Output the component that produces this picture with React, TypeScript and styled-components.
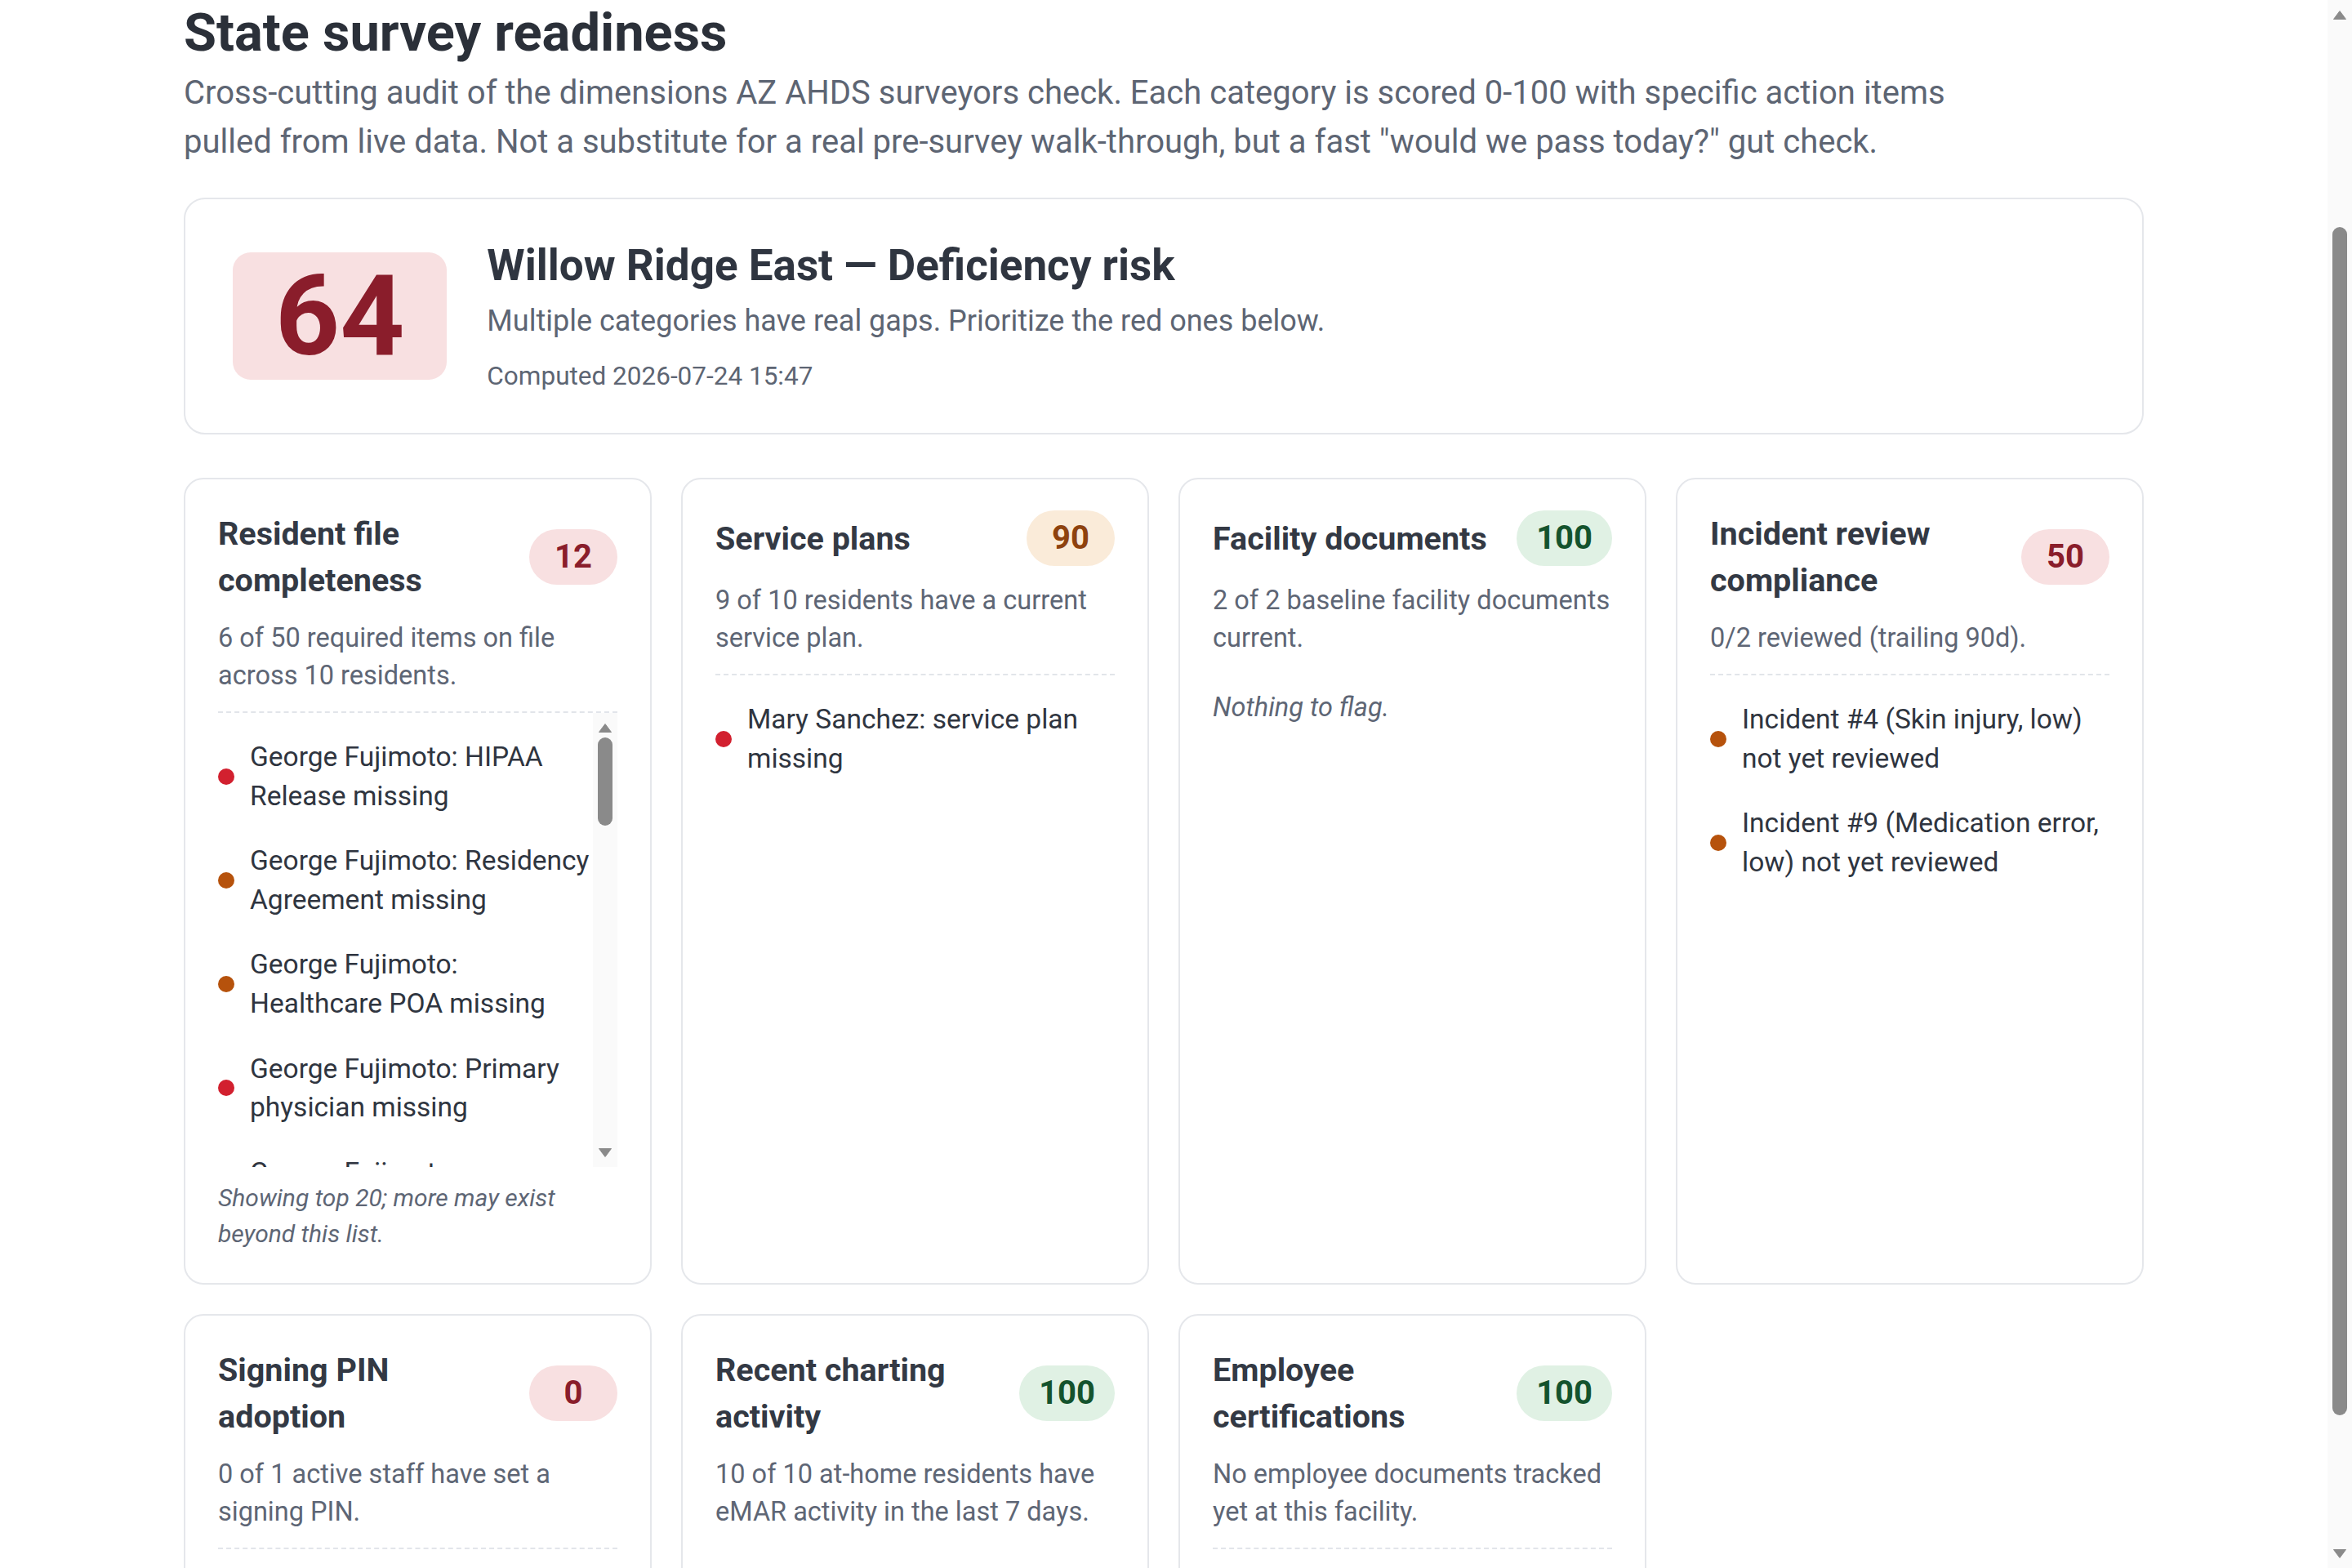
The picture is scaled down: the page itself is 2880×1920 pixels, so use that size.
import React, { useLayoutEffect, useRef, useState } from "react";
import styled, { createGlobalStyle, css } from "styled-components";

type Tone = "red" | "amber" | "green";
type Level = "high" | "medium";
type FrameKind = "page" | "list";

interface Finding {
  text: string;
  level: Level;
}

interface Category {
  title: string;
  score: number;
  tone: Tone;
  desc: string;
  findings: Finding[];
  scroll?: boolean;
  note?: string;
}

const GlobalStyle = createGlobalStyle`
  html, body, #root {
    margin: 0;
    padding: 0;
    height: 100%;
    overflow: hidden;
    background: #ffffff;
  }
  body {
    font-family: Roboto, "Liberation Sans", Arial, sans-serif;
    color: #333a45;
  }
  *, *::before, *::after { box-sizing: border-box; }
`;

const toneColors: Record<Tone, { bg: string; fg: string }> = {
  red: { bg: "#f8e0e1", fg: "#8a1d2b" },
  amber: { bg: "#faebd9", fg: "#8e420e" },
  green: { bg: "#e0f1e4", fg: "#14532d" },
};

const dotColors: Record<Level, string> = {
  high: "#d2202f",
  medium: "#b6520c",
};

/* ---------- scroll frame with a drawn classic scrollbar ---------- */

const Frame = styled.div<{ $kind: FrameKind }>`
  display: flex;
  ${({ $kind }) =>
    $kind === "page"
      ? css`
          height: 100vh;
        `
      : css`
          max-height: 558px;
          margin-top: 21px;
          border-top: 2px dashed #e2e5ea;
        `}
`;

const ScrollViewport = styled.div`
  flex: 1;
  min-width: 0;
  overflow: hidden;
  scrollbar-width: none;
`;

const Rail = styled.div`
  width: 30px;
  flex-shrink: 0;
  display: flex;
  flex-direction: column;
  background: #fafafa;
`;

const RailButton = styled.div<{ $dir: "up" | "down" }>`
  height: 30px;
  flex-shrink: 0;
  display: flex;
  justify-content: center;
  align-items: ${({ $dir }) => ($dir === "up" ? "flex-start" : "flex-end")};
  padding: ${({ $dir }) => ($dir === "up" ? "13px 0 0" : "0 0 12px")};
`;

const RailTrack = styled.div`
  flex: 1;
  min-height: 0;
  display: flex;
  flex-direction: column;
  align-items: center;
`;

const RailThumb = styled.div`
  width: 18px;
  flex-shrink: 0;
  border-radius: 9px;
  background: #8a8a8a;
`;

const Arrow: React.FC<{ dir: "up" | "down" }> = ({ dir }) => (
  <svg width="16" height="11" viewBox="0 0 16 11" aria-hidden="true">
    <polygon
      points={dir === "up" ? "8,0.5 15.5,10.5 0.5,10.5" : "0.5,0.5 15.5,0.5 8,10.5"}
      fill="#8a8a8a"
      stroke="#8a8a8a"
      strokeWidth="1"
      strokeLinejoin="round"
    />
  </svg>
);

const ScrollFrame: React.FC<{
  kind: FrameKind;
  initialScroll?: number;
  children: React.ReactNode;
}> = ({ kind, initialScroll = 0, children }) => {
  const viewRef = useRef<HTMLDivElement>(null);
  const trackRef = useRef<HTMLDivElement>(null);
  const [thumb, setThumb] = useState({ offset: 0, size: 0 });

  useLayoutEffect(() => {
    const measure = () => {
      const view = viewRef.current;
      const track = trackRef.current;
      if (!view || !track) return;
      view.scrollTop = initialScroll;
      const trackLen = track.clientHeight;
      const total = view.scrollHeight;
      const visible = view.clientHeight;
      const size = Math.max(40, Math.round((trackLen * visible) / Math.max(total, 1)));
      const maxScroll = Math.max(total - visible, 1);
      const offset = Math.round((view.scrollTop / maxScroll) * (trackLen - size));
      setThumb({ offset, size });
    };
    measure();
    const t = window.setTimeout(measure, 80);
    if (document.fonts) document.fonts.ready.then(measure);
    window.addEventListener("resize", measure);
    return () => {
      window.clearTimeout(t);
      window.removeEventListener("resize", measure);
    };
  }, [initialScroll]);

  return (
    <Frame $kind={kind}>
      <ScrollViewport ref={viewRef}>{children}</ScrollViewport>
      <Rail>
        <RailButton $dir="up">
          <Arrow dir="up" />
        </RailButton>
        <RailTrack ref={trackRef}>
          <RailThumb style={{ marginTop: thumb.offset, height: thumb.size }} />
        </RailTrack>
        <RailButton $dir="down">
          <Arrow dir="down" />
        </RailButton>
      </Rail>
    </Frame>
  );
};

/* ---------- page ---------- */

const TopBar = styled.header`
  height: 120px;
  display: flex;
  align-items: center;
  gap: 40px;
  padding: 0 226px;
  border-bottom: 2px solid #eef0f3;
  font-size: 32px;
  font-weight: 600;
  color: #333a45;
`;

const TopLink = styled.span`
  font-weight: 400;
  color: #5e6675;
`;

const Main = styled.main`
  max-width: 2400px;
  margin: 0 auto;
  padding: 207px 0 50px;
`;

const PageTitle = styled.h1`
  margin: 0 0 4px;
  font-size: 65px;
  line-height: 80px;
  font-weight: 700;
  color: #2b3039;
`;

const Lead = styled.p`
  margin: 0;
  max-width: 2200px;
  font-size: 40px;
  line-height: 60px;
  color: #5d6573;
`;

const ScoreCard = styled.section`
  margin-top: 38px;
  display: flex;
  align-items: center;
  gap: 49px;
  padding: 47px 58px;
  border: 2px solid #e5e7eb;
  border-radius: 26px;
  background: #fff;
`;

const ScoreBox = styled.div<{ $tone: Tone }>`
  flex-shrink: 0;
  padding: 9px 52px;
  border-radius: 22px;
  font-size: 138px;
  line-height: 1;
  font-weight: 700;
  ${({ $tone }) => css`
    background: ${toneColors[$tone].bg};
    color: ${toneColors[$tone].fg};
  `}
`;

const ScoreText = styled.div`
  display: flex;
  flex-direction: column;
`;

const ScoreHeading = styled.h2`
  margin: 0 0 7px;
  font-size: 53px;
  line-height: 68px;
  font-weight: 700;
  color: #2f3540;
`;

const ScoreSummary = styled.p`
  margin: 0 0 18px;
  font-size: 36px;
  line-height: 54px;
  color: #5d6573;
`;

const Computed = styled.p`
  margin: 0;
  font-size: 31.5px;
  line-height: 45px;
  color: #5d6573;
`;

const Grid = styled.div`
  margin-top: 53px;
  display: grid;
  grid-template-columns: repeat(4, minmax(0, 1fr));
  gap: 36px;
`;

const Card = styled.article`
  display: flex;
  flex-direction: column;
  padding: 38px 40px;
  border: 2px solid #e5e7eb;
  border-radius: 24px;
  background: #fff;
`;

const CardHeader = styled.div`
  display: flex;
  align-items: center;
  justify-content: space-between;
  gap: 16px;
`;

const CardTitle = styled.h3`
  margin: 0;
  font-size: 39.5px;
  line-height: 57px;
  font-weight: 700;
  color: #333944;
`;

const Badge = styled.span<{ $tone: Tone }>`
  flex-shrink: 0;
  min-width: 108px;
  padding: 7px 24px;
  border-radius: 999px;
  text-align: center;
  font-size: 40px;
  line-height: 54px;
  font-weight: 700;
  ${({ $tone }) => css`
    background: ${toneColors[$tone].bg};
    color: ${toneColors[$tone].fg};
  `}
`;

const CardDesc = styled.p`
  margin: 19px 0 0;
  font-size: 32.5px;
  line-height: 46px;
  color: #5e6675;
`;

const FindingSection = styled.div`
  margin-top: 21px;
  border-top: 2px dashed #e2e5ea;
`;

const FindingList = styled.ul`
  list-style: none;
  margin: 0;
  padding: 14px 0 0;
`;

const FindingItem = styled.li`
  display: flex;
  align-items: center;
  gap: 19px;
  padding: 16px 0;
  font-size: 33.5px;
  line-height: 47.6px;
  color: #2f3540;
`;

const Dot = styled.span<{ $level: Level }>`
  flex-shrink: 0;
  width: 20px;
  height: 20px;
  border-radius: 50%;
  background: ${({ $level }) => dotColors[$level]};
`;

const EmptyNote = styled.p`
  margin: 39px 0 0;
  font-size: 32.5px;
  line-height: 46px;
  font-style: italic;
  color: #5e6675;
`;

const FootNote = styled.p`
  margin: 16px 0 0;
  font-size: 30px;
  line-height: 44px;
  font-style: italic;
  color: #5e6675;
`;

const residentFindings: Finding[] = [
  { text: "George Fujimoto: HIPAA Release missing", level: "high" },
  { text: "George Fujimoto: Residency Agreement missing", level: "medium" },
  { text: "George Fujimoto: Healthcare POA missing", level: "medium" },
  { text: "George Fujimoto: Primary physician missing", level: "high" },
  { text: "George Fujimoto: Emergency contact missing", level: "high" },
  { text: "Helen Marsh: HIPAA Release missing", level: "high" },
  { text: "Helen Marsh: Residency Agreement missing", level: "medium" },
  { text: "Helen Marsh: Healthcare POA missing", level: "medium" },
  { text: "Helen Marsh: Primary physician missing", level: "high" },
  { text: "Arthur Benson: HIPAA Release missing", level: "high" },
  { text: "Arthur Benson: Residency Agreement missing", level: "medium" },
  { text: "Arthur Benson: Healthcare POA missing", level: "medium" },
  { text: "Arthur Benson: Primary physician missing", level: "high" },
  { text: "Ruth Okafor: HIPAA Release missing", level: "high" },
  { text: "Ruth Okafor: Residency Agreement missing", level: "medium" },
  { text: "Ruth Okafor: Healthcare POA missing", level: "medium" },
  { text: "Ruth Okafor: Primary physician missing", level: "high" },
  { text: "Mary Sanchez: HIPAA Release missing", level: "high" },
  { text: "Mary Sanchez: Residency Agreement missing", level: "medium" },
  { text: "Mary Sanchez: Healthcare POA missing", level: "medium" },
];

const categories: Category[] = [
  {
    title: "Resident file completeness",
    score: 12,
    tone: "red",
    desc: "6 of 50 required items on file across 10 residents.",
    findings: residentFindings,
    scroll: true,
    note: "Showing top 20; more may exist beyond this list.",
  },
  {
    title: "Service plans",
    score: 90,
    tone: "amber",
    desc: "9 of 10 residents have a current service plan.",
    findings: [{ text: "Mary Sanchez: service plan missing", level: "high" }],
  },
  {
    title: "Facility documents",
    score: 100,
    tone: "green",
    desc: "2 of 2 baseline facility documents current.",
    findings: [],
  },
  {
    title: "Incident review compliance",
    score: 50,
    tone: "red",
    desc: "0/2 reviewed (trailing 90d).",
    findings: [
      { text: "Incident #4 (Skin injury, low) not yet reviewed", level: "medium" },
      { text: "Incident #9 (Medication error, low) not yet reviewed", level: "medium" },
    ],
  },
  {
    title: "Signing PIN adoption",
    score: 0,
    tone: "red",
    desc: "0 of 1 active staff have set a signing PIN.",
    findings: [{ text: "Dana Whitfield has not set a signing PIN", level: "high" }],
  },
  {
    title: "Recent charting activity",
    score: 100,
    tone: "green",
    desc: "10 of 10 at-home residents have eMAR activity in the last 7 days.",
    findings: [],
  },
  {
    title: "Employee certifications",
    score: 100,
    tone: "green",
    desc: "No employee documents tracked yet at this facility.",
    findings: [{ text: "Upload staff certifications to start tracking", level: "medium" }],
  },
];

const Findings: React.FC<{ items: Finding[] }> = ({ items }) => (
  <FindingList>
    {items.map((f) => (
      <FindingItem key={f.text}>
        <Dot $level={f.level} />
        <span>{f.text}</span>
      </FindingItem>
    ))}
  </FindingList>
);

const CategoryCard: React.FC<{ category: Category }> = ({ category }) => {
  let body: React.ReactNode;
  if (category.findings.length === 0) {
    body = <EmptyNote>Nothing to flag.</EmptyNote>;
  } else if (category.scroll) {
    body = (
      <ScrollFrame kind="list">
        <Findings items={category.findings} />
      </ScrollFrame>
    );
  } else {
    body = (
      <FindingSection>
        <Findings items={category.findings} />
      </FindingSection>
    );
  }
  return (
    <Card>
      <CardHeader>
        <CardTitle>{category.title}</CardTitle>
        <Badge $tone={category.tone}>{category.score}</Badge>
      </CardHeader>
      <CardDesc>{category.desc}</CardDesc>
      {body}
      {category.note && <FootNote>{category.note}</FootNote>}
    </Card>
  );
};

export default function App() {
  return (
    <>
      <GlobalStyle />
      <ScrollFrame kind="page" initialScroll={327}>
        <TopBar>
          Willow Ridge East
          <TopLink>Compliance</TopLink>
        </TopBar>
        <Main>
          <PageTitle>State survey readiness</PageTitle>
          <Lead>
            Cross-cutting audit of the dimensions AZ AHDS surveyors check. Each category is scored
            0-100 with specific action items pulled from live data. Not a substitute for a real
            pre-survey walk-through, but a fast "would we pass today?" gut check.
          </Lead>
          <ScoreCard>
            <ScoreBox $tone="red">64</ScoreBox>
            <ScoreText>
              <ScoreHeading>Willow Ridge East — Deficiency risk</ScoreHeading>
              <ScoreSummary>
                Multiple categories have real gaps. Prioritize the red ones below.
              </ScoreSummary>
              <Computed>Computed 2026-07-24 15:47</Computed>
            </ScoreText>
          </ScoreCard>
          <Grid>
            {categories.map((c) => (
              <CategoryCard key={c.title} category={c} />
            ))}
          </Grid>
        </Main>
      </ScrollFrame>
    </>
  );
}
